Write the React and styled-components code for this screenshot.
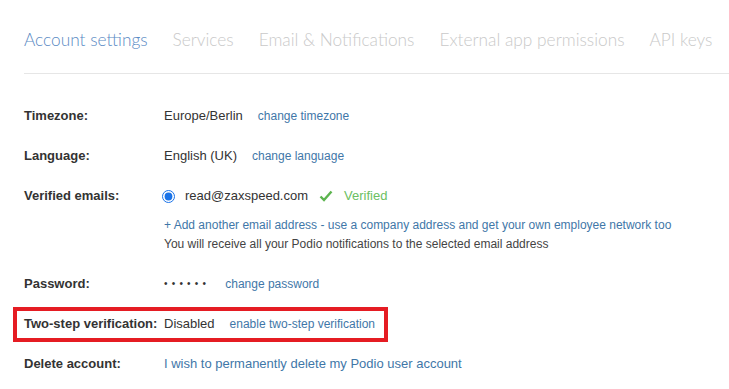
import React from 'react';
import styled, { createGlobalStyle } from 'styled-components';

const GlobalStyle = createGlobalStyle`
  body {
    margin: 0;
    background: #ffffff;
    font-family: "Liberation Sans", Arial, sans-serif;
    color: #333333;
  }
`;

const Page = styled.div`
  width: 729px;
  height: 389px;
  overflow: hidden;
  padding-left: 24px;
  box-sizing: border-box;
`;

const Tabs = styled.nav`
  display: flex;
  gap: 25px;
  padding-top: 28px;
  height: 74px;
  box-sizing: border-box;
  border-bottom: 1px solid #e6e6e6;
`;

const Tab = styled.a`
  font-family: Lato, "Open Sans", sans-serif;
  font-weight: 300;
  font-size: 17.3px;
  line-height: 24px;
  white-space: nowrap;
  color: ${({ active }) => (active ? '#5a8ac4' : '#c9c9c9')};
  text-decoration: none;
`;

const Settings = styled.div`
  margin-top: 22px;
  font-size: 13px;
  line-height: 16px;
`;

const Row = styled.div`
  position: relative;
  display: grid;
  grid-template-columns: 140px 1fr;
  padding: ${({ tight }) => (tight ? '12px 0 10px' : '12px 0')};

  ${({ highlight }) =>
    highlight &&
    `
    &::after {
      content: '';
      position: absolute;
      left: -11px;
      top: 3px;
      width: 375px;
      height: 35px;
      box-sizing: border-box;
      border: 4px solid #e51c23;
    }
  `}
`;

const Label = styled.div`
  font-weight: bold;
  color: #333333;
  white-space: nowrap;
`;

const Value = styled.div`
  display: flex;
  align-items: center;
  gap: ${({ gap }) => gap || 15}px;
  white-space: nowrap;
`;

const Link = styled.a`
  color: #3f77a8;
  font-size: 12px;
  text-decoration: none;
`;

const BigLink = styled(Link)`
  font-size: 13px;
`;

const Dots = styled.span`
  font-size: 10px;
  letter-spacing: 4.2px;
  color: #333333;
`;

const EmailBlock = styled.div`
  display: flex;
  flex-direction: column;
`;

const EmailLine = styled.div`
  display: flex;
  align-items: center;
`;

const Radio = styled.input`
  margin: 0 10px 0 -2px;
  width: 13px;
  height: 13px;
  accent-color: #1a73e8;
`;

const Verified = styled.span`
  display: inline-flex;
  align-items: center;
  gap: 11px;
  margin-left: 11px;
  color: #6bc062;
`;

const Note = styled.div`
  font-size: 12px;
  line-height: 19px;
  color: ${({ muted }) => (muted ? '#444444' : '#3f77a8')};
  margin-top: ${({ first }) => (first ? '12px' : '0')};
`;

const tabs = ['Account settings', 'Services', 'Email & Notifications', 'External app permissions', 'API keys'];

const Check = () => (
  <svg width="14" height="12" viewBox="0 0 14 12">
    <polyline points="1.5,6.5 5,10 12.5,1.5" fill="none" stroke="#5cb44f" strokeWidth="2.4" />
  </svg>
);

const App = () => (
  <>
    <GlobalStyle />
    <Page>
      <Tabs>
        {tabs.map((t, i) => (
          <Tab key={t} active={i === 0}>{t}</Tab>
        ))}
      </Tabs>
      <Settings>
        <Row>
          <Label>Timezone:</Label>
          <Value>
            <span>Europe/Berlin</span>
            <Link href="#">change timezone</Link>
          </Value>
        </Row>
        <Row>
          <Label>Language:</Label>
          <Value>
            <span>English (UK)</span>
            <Link href="#">change language</Link>
          </Value>
        </Row>
        <Row tight>
          <Label>Verified emails:</Label>
          <EmailBlock>
            <EmailLine>
              <Radio type="radio" checked readOnly />
              <span>read@zaxspeed.com</span>
              <Verified>
                <Check />
                Verified
              </Verified>
            </EmailLine>
            <Note first>+ Add another email address - use a company address and get your own employee network too</Note>
            <Note muted>You will receive all your Podio notifications to the selected email address</Note>
          </EmailBlock>
        </Row>
        <Row>
          <Label>Password:</Label>
          <Value>
            <Dots>••••••</Dots>
            <Link href="#">change password</Link>
          </Value>
        </Row>
        <Row highlight>
          <Label>Two-step verification:</Label>
          <Value>
            <span>Disabled</span>
            <Link href="#">enable two-step verification</Link>
          </Value>
        </Row>
        <Row>
          <Label>Delete account:</Label>
          <Value>
            <BigLink href="#">I wish to permanently delete my Podio user account</BigLink>
          </Value>
        </Row>
      </Settings>
    </Page>
  </>
);

export default App;
